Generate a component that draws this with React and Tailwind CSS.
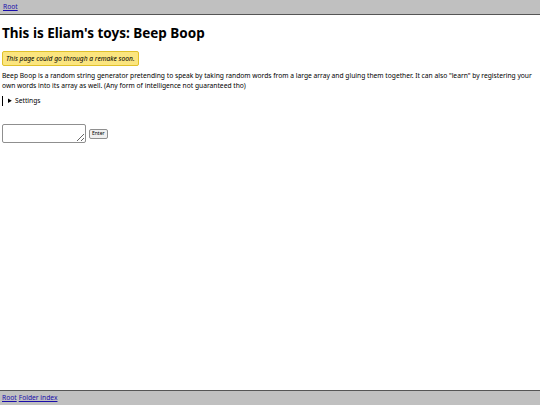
import React, { useState } from 'react';

export default function App() {
  const [text, setText] = useState('');

  return (
    <div className="min-h-screen flex flex-col bg-white text-black font-['Noto_Sans',sans-serif]">
      <div className="h-[15px] bg-[#c0c0c0] border-b border-[#555] px-[3px] flex items-center">
        <a href="#" className="text-[6.7px] text-[#1a0dab] underline leading-none">Root</a>
      </div>

      <div className="flex-1 px-[2px]">
        <h1 className="text-[13.5px] font-bold mt-[9px] leading-[18px]">This is Eliam's toys: Beep Boop</h1>

        <div className="mt-[9px] inline-block bg-[#fbe57f] border border-[#e1c12a] rounded-[2px] px-[3px] py-[2px] text-[6.7px] italic leading-[9px]">
          This page could go through a remake soon.
        </div>

        <p className="mt-[4px] text-[6.7px] leading-[10px]">
          Beep Boop is a random string generator pretending to speak by taking random words from a large array and gluing them together. It can also "learn" by registering your own words into its array as well. (Any form of intelligence not guaranteed tho)
        </p>

        <details className="mt-[5px] border-l border-black pl-[5px] text-[6.7px] leading-[10px]">
          <summary className="cursor-pointer">Settings</summary>
        </details>

        <div className="mt-[18px] flex items-center gap-[3px]">
          <textarea
            className="w-[84px] h-[19px] border border-[#8f8f8f] rounded-[2px] bg-white text-[7px] resize"
            value={text}
            onChange={(e) => setText(e.target.value)}
          />
          <button className="h-[10px] px-[2px] border border-[#8f8f8f] rounded-[2px] bg-[#efefef] text-[5px] leading-none">
            Enter
          </button>
        </div>
      </div>

      <div className="h-[15px] bg-[#c0c0c0] border-t border-[#555] px-[2px] flex items-center gap-[2px]">
        <a href="#" className="text-[6.7px] text-[#1a0dab] underline leading-none">Root</a>
        <a href="#" className="text-[6.7px] text-[#1a0dab] underline leading-none">Folder index</a>
      </div>
    </div>
  );
}
